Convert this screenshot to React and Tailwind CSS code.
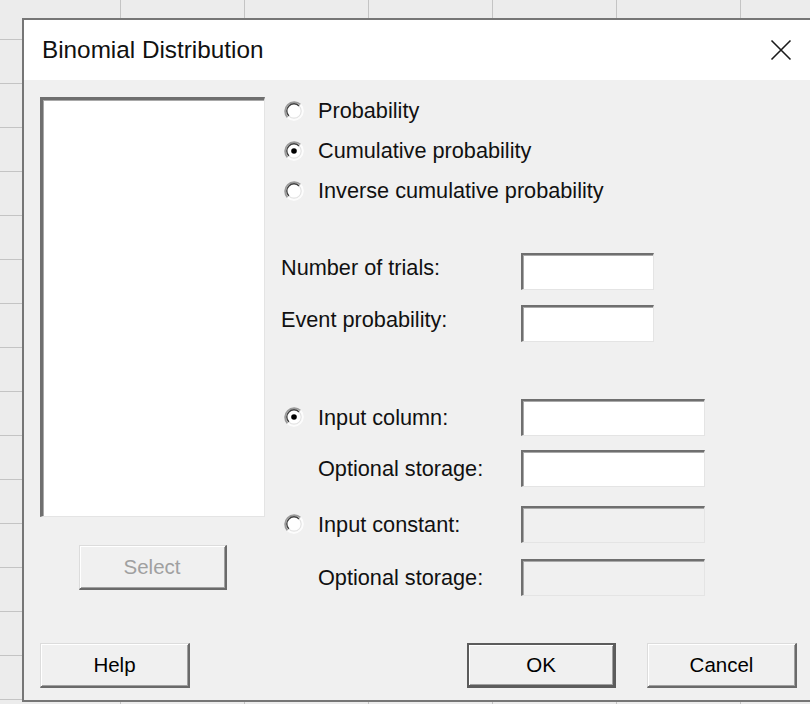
import React from "react";

const face = "font-['Liberation_Sans',Arial,sans-serif]";

function Radio({ checked }) {
  return (
    <svg width="20" height="20" viewBox="0 0 20 20" className="shrink-0">
      <circle cx="10" cy="10" r="9.2" fill="#ffffff" />
      <path d="M3.5 16.5 A9.2 9.2 0 0 1 16.5 3.5" stroke="#9a9a9a" strokeWidth="1.7" fill="none" />
      <path d="M4.9 15.1 A7.2 7.2 0 0 1 15.1 4.9" stroke="#404040" strokeWidth="1.4" fill="none" />
      <path d="M16.5 3.5 A9.2 9.2 0 0 1 3.5 16.5" stroke="#fcfcfc" strokeWidth="1.7" fill="none" />
      <path d="M15.1 4.9 A7.2 7.2 0 0 1 4.9 15.1" stroke="#e2e2e2" strokeWidth="1.2" fill="none" />
      {checked && <circle cx="10" cy="10" r="2.8" fill="#000000" />}
    </svg>
  );
}

function Field({ wide, disabled }) {
  return (
    <div
      className={`h-[37px] ${wide ? "w-[184px]" : "w-[133px]"} border-t-2 border-l-2 border-r border-b border-t-[#6f6f6f] border-l-[#6f6f6f] border-r-[#e4e4e4] border-b-[#e4e4e4] shadow-[inset_1px_1px_0_#a9a9a9] ${
        disabled ? "bg-[#f0f0f0]" : "bg-white"
      }`}
    />
  );
}

function Button({ children, disabled, isDefault, className = "" }) {
  const frame = isDefault
    ? "border-2 border-b-[3px] border-r-[3px] border-[#5c5c5c] shadow-[inset_1px_1px_0_#ffffff,inset_-1px_-1px_0_#a0a0a0]"
    : "border-t border-l border-r-2 border-b-2 border-t-[#dcdcdc] border-l-[#dcdcdc] border-r-[#6a6a6a] border-b-[#6a6a6a] shadow-[inset_1px_1px_0_#ffffff,inset_-1px_-1px_0_#a0a0a0]";
  return (
    <div
      className={`h-[45px] flex items-center justify-center bg-[#f0f0f0] text-[20.5px] ${frame} ${
        disabled ? "text-[#a0a0a0]" : "text-black"
      } ${className}`}
    >
      {children}
    </div>
  );
}

function RadioRow({ checked, label }) {
  return (
    <div className="h-10 flex items-center gap-[14px] pl-[3px]">
      <Radio checked={checked} />
      <span>{label}</span>
    </div>
  );
}

export default function App() {
  return (
    <div
      className={`${face} w-[810px] h-[704px] overflow-hidden bg-[#ececec] bg-[linear-gradient(to_right,#c4c4c4_1px,transparent_1px),linear-gradient(to_bottom,#c4c4c4_1px,transparent_1px)] bg-size-[124px_44px] bg-position-[120px_39px] pt-[18px] pl-[22px]`}
    >
      <div className="w-[800px] h-[684px] border-2 border-[#767676] bg-[#f0f0f0] flex flex-col text-[#111111]">
        {/* title bar */}
        <div className="h-[60px] bg-white flex items-center justify-between pl-[18px] pr-[28px]">
          <span className="text-[24.3px]">Binomial Distribution</span>
          <svg width="22" height="22" viewBox="0 0 22 22">
            <path d="M1.5 1.5 L20.5 20.5 M20.5 1.5 L1.5 20.5" stroke="#1a1a1a" strokeWidth="1.6" />
          </svg>
        </div>

        {/* dialog body */}
        <div className="flex-1 flex flex-col text-[21.7px] leading-none">
          <div className="flex">
            {/* variables list and Select */}
            <div className="pl-[16px] pt-[17px] flex flex-col w-[241px]">
              <div className="w-[225px] h-[420px] bg-white border-t-[3px] border-l-[3px] border-r border-b border-t-[#6f6f6f] border-l-[#6f6f6f] border-r-[#e4e4e4] border-b-[#e4e4e4] shadow-[inset_1px_1px_0_#a9a9a9]" />
              <div className="w-[225px] flex justify-center pt-[28px]">
                <Button disabled className="w-[148px]">
                  Select
                </Button>
              </div>
            </div>

            {/* options */}
            <div className="ml-[16px] pt-[11px] flex flex-col">
              <RadioRow label="Probability" />
              <RadioRow checked label="Cumulative probability" />
              <RadioRow label="Inverse cumulative probability" />

              <div className="mt-[42px] flex items-center">
                <span className="w-[240px] -mt-[7px]">Number of trials:</span>
                <Field />
              </div>
              <div className="mt-[15px] flex items-center">
                <span className="w-[240px] -mt-[7px]">Event probability:</span>
                <Field />
              </div>

              <div className="mt-[57px] flex items-center">
                <div className="w-[240px] flex items-center gap-[14px] pl-[3px]">
                  <Radio checked />
                  <span>Input column:</span>
                </div>
                <Field wide />
              </div>
              <div className="mt-[14px] flex items-center">
                <span className="w-[240px] pl-[37px]">Optional storage:</span>
                <Field wide />
              </div>
              <div className="mt-[19px] flex items-center">
                <div className="w-[240px] flex items-center gap-[14px] pl-[3px]">
                  <Radio />
                  <span>Input constant:</span>
                </div>
                <Field wide disabled />
              </div>
              <div className="mt-[16px] flex items-center">
                <span className="w-[240px] pl-[37px]">Optional storage:</span>
                <Field wide disabled />
              </div>
            </div>
          </div>

          {/* command buttons */}
          <div className="mt-auto pb-[12px] pl-[16px] pr-[23px] flex items-center">
            <Button className="w-[150px]">Help</Button>
            <div className="flex-1" />
            <div className="flex gap-[31px]">
              <Button isDefault className="w-[149px]">
                OK
              </Button>
              <Button className="w-[150px]">Cancel</Button>
            </div>
          </div>
        </div>
      </div>
    </div>
  );
}
